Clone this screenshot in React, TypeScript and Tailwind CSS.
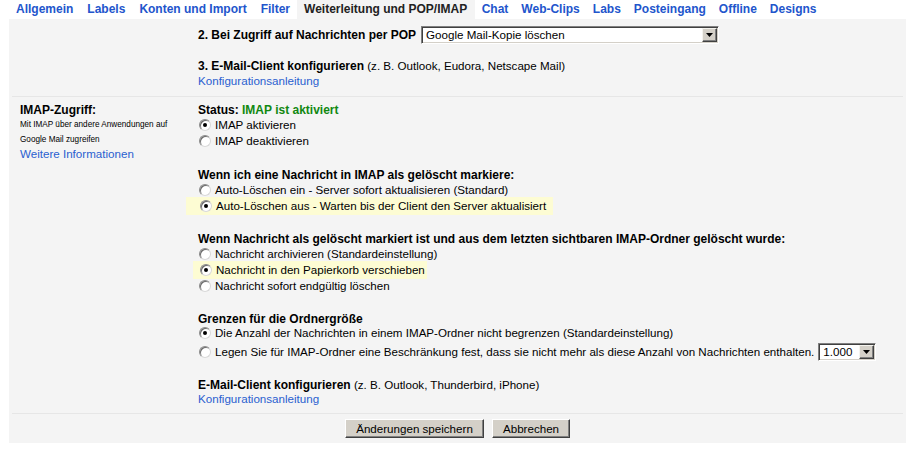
import React from "react";

const tabs = [
  "Allgemein",
  "Labels",
  "Konten und Import",
  "Filter",
  "Weiterleitung und POP/IMAP",
  "Chat",
  "Web-Clips",
  "Labs",
  "Posteingang",
  "Offline",
  "Designs",
];

function Radio({ checked }: { checked?: boolean }) {
  return (
    <span className="ml-[1px] mr-[4px] flex h-[12px] w-[12px] shrink-0 items-center justify-center rounded-full border border-t-[#8a8a8a] border-l-[#8a8a8a] border-r-[#d8d8d8] border-b-[#d8d8d8] bg-white shadow-[inset_1px_1px_0_#6a6a6a]">
      {checked && <span className="h-[4px] w-[4px] rounded-full bg-black" />}
    </span>
  );
}

function Opt({
  checked,
  children,
}: {
  checked?: boolean;
  children: React.ReactNode;
}) {
  return (
    <div className="flex h-[16px] items-center">
      <Radio checked={checked} />
      <span className="leading-[16px]">{children}</span>
    </div>
  );
}

function SelectBox({
  value,
  width,
}: {
  value: string;
  width: string;
}) {
  return (
    <div
      className={`flex h-[18px] items-stretch border border-t-[#808080] border-l-[#808080] border-r-white border-b-white bg-white text-[11.6px] font-normal shadow-[inset_1px_1px_0_#404040,inset_-1px_-1px_0_#d4d0c8] ${width}`}
    >
      <span className="flex flex-1 items-center pl-[4px] leading-none">{value}</span>
      <span className="my-[1px] mr-[1px] flex w-[15px] items-center justify-center border border-t-[#f4f3ee] border-l-[#f4f3ee] border-r-[#404040] border-b-[#404040] bg-[#d4d0c8] shadow-[inset_-1px_-1px_0_#808080]">
        <svg width="7" height="4" viewBox="0 0 7 4">
          <path d="M0 0h7L3.5 4z" fill="#000" />
        </svg>
      </span>
    </div>
  );
}

function Btn({ children, w }: { children: React.ReactNode; w: string }) {
  return (
    <button
      className={`flex h-[19px] items-center justify-center border border-t-white border-l-white border-r-[#404040] border-b-[#404040] bg-[#d4d0c8] text-[11.6px] leading-none text-black shadow-[inset_-1px_-1px_0_#808080] ${w}`}
    >
      {children}
    </button>
  );
}

export default function App() {
  const link = "text-[#2a5fd0]";
  return (
    <div
      className="h-[450px] w-[909px] bg-white text-[11.6px] leading-[16px] text-black"
      style={{ fontFamily: '"Liberation Sans", Arial, sans-serif' }}
    >
      {/* Tabs */}
      <div className="flex h-[19px] pl-[9px]">
        {tabs.map((t, i) => {
          const active = t === "Weiterleitung und POP/IMAP";
          return (
            <div
              key={t}
              className={`text-[12px] font-bold leading-[19px] ${
                active
                  ? "bg-[#f4f4f4] pl-[7px] pr-[8px] text-[#222]"
                  : i > 4
                  ? "px-[6.5px] text-[#2255cc]"
                  : "px-[7px] text-[#2255cc]"
              }`}
            >
              {t}
            </div>
          );
        })}
      </div>

      {/* Panel */}
      <div className="ml-[9px] w-[897px] bg-[#f4f4f4]">
        {/* Row 1 */}
        <div className="mx-[3px] flex h-[78px] border-b border-[#e6e6e6] pt-[7px]">
          <div className="w-[186px] shrink-0" />
          <div className="flex flex-col">
            <div className="flex h-[18px] items-center">
              <span className="text-[12px] font-bold">2. Bei Zugriff auf Nachrichten per POP</span>
              <span className="ml-[5px]">
                <SelectBox value="Google Mail-Kopie löschen" width="w-[298px]" />
              </span>
            </div>
            <div className="mt-[14px] flex h-[16px] items-baseline">
              <span className="text-[12px] font-bold">3. E-Mail-Client konfigurieren</span>
              <span className="whitespace-pre"> (z. B. Outlook, Eudora, Netscape Mail)</span>
            </div>
            <div className={`${link} -mt-[1px] h-[15px] leading-[15px]`}>Konfigurationsanleitung</div>
          </div>
        </div>

        {/* Row 2 */}
        <div className="mx-[3px] flex h-[317px] border-b border-[#e6e6e6] pt-[4px]">
          <div className="w-[186px] shrink-0 pl-[8px]">
            <div className="h-[16px] text-[12px] font-bold leading-[18px]">IMAP-Zugriff:</div>
            <div className="text-[8.2px] leading-[15px]">
              Mit IMAP über andere Anwendungen auf
              <br />
              Google Mail zugreifen
            </div>
            <div className={`${link} leading-[14px]`}>Weitere Informationen</div>
          </div>
          <div className="flex flex-col">
            <div className="h-[16px] text-[12px] font-bold leading-[18px]">
              Status: <span className="text-[#118811]">IMAP ist aktiviert</span>
            </div>
            <Opt checked>IMAP aktivieren</Opt>
            <Opt>IMAP deaktivieren</Opt>

            <div className="mt-[18px] h-[15px] text-[12px] font-bold leading-[17px]">
              Wenn ich eine Nachricht in IMAP als gelöscht markiere:
            </div>
            <Opt>Auto-Löschen ein - Server sofort aktualisieren (Standard)</Opt>
            <div className="-my-[1px] -ml-[12px] w-fit bg-[#fdfcd3] py-[1px] pl-[13px] pr-[7px]">
              <div className="flex h-[16px] items-center">
                <Radio checked />
                <span>Auto-Löschen aus - Warten bis der Client den Server aktualisiert</span>
              </div>
            </div>

            <div className="mt-[17px] h-[15px] text-[12px] font-bold leading-[17px]">
              Wenn Nachricht als gelöscht markiert ist und aus dem letzten sichtbaren IMAP-Ordner gelöscht wurde:
            </div>
            <Opt>Nachricht archivieren (Standardeinstellung)</Opt>
            <div className="-my-[1px] -ml-[5px] w-fit bg-[#fdfcd3] py-[1px] pl-[6px] pr-[2px]">
              <div className="flex h-[16px] items-center">
                <Radio checked />
                <span>Nachricht in den Papierkorb verschieben</span>
              </div>
            </div>
            <Opt>Nachricht sofort endgültig löschen</Opt>

            <div className="mt-[16px] h-[15px] text-[12px] font-bold leading-[18px]">Grenzen für die Ordnergröße</div>
            <Opt checked>
              Die Anzahl der Nachrichten in einem IMAP-Ordner nicht begrenzen (Standardeinstellung)
            </Opt>
            <div className="mt-[1px] flex h-[20px] items-center">
              <Radio />
              <span>
                Legen Sie für IMAP-Ordner eine Beschränkung fest, dass sie nicht mehr als diese Anzahl von Nachrichten enthalten.
              </span>
              <span className="ml-[4px]">
                <SelectBox value="1.000" width="w-[58px]" />
              </span>
            </div>

            <div className="mt-[14px] flex h-[15px] items-baseline leading-[17px]">
              <span className="text-[12px] font-bold">E-Mail-Client konfigurieren</span>
              <span className="whitespace-pre"> (z. B. Outlook, Thunderbird, iPhone)</span>
            </div>
            <div className={`${link} h-[16px]`}>Konfigurationsanleitung</div>
          </div>
        </div>

        {/* Buttons */}
        <div className="flex h-[29px] justify-center gap-[8px] pt-[5px]">
          <Btn w="w-[139px]">Änderungen speichern</Btn>
          <Btn w="w-[78px]">Abbrechen</Btn>
        </div>
      </div>
    </div>
  );
}
